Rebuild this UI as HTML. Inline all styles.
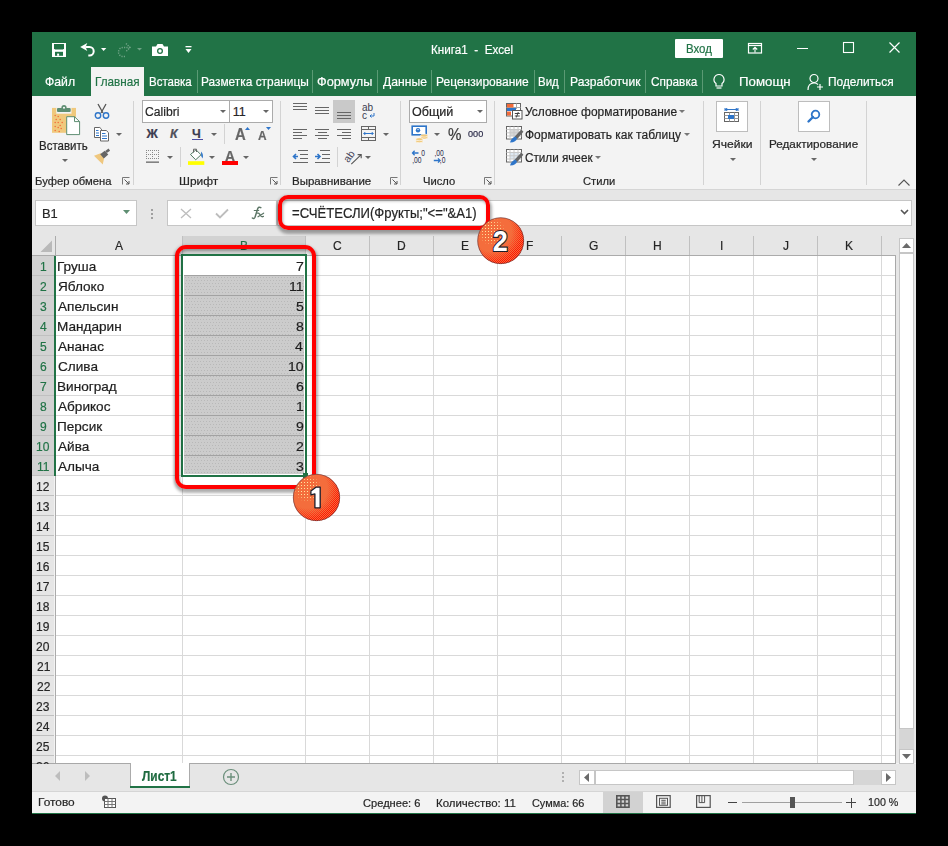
<!DOCTYPE html>
<html><head><meta charset="utf-8">
<style>
*{margin:0;padding:0;box-sizing:border-box}
html,body{width:948px;height:846px;background:#000;overflow:hidden;font-family:"Liberation Sans",sans-serif}
.a{position:absolute}
.t{position:absolute;white-space:nowrap;line-height:1;-webkit-text-stroke:0.2px currentColor}
svg{overflow:visible}
</style></head><body>
<div class="a" style="left:32px;top:32px;width:884px;height:782px;background:#F3F3F3;"></div>
<div class="a" style="left:32px;top:32px;width:884px;height:64px;background:#217346;"></div>
<svg class="a" style="left:52px;top:43px;" width="14" height="14" viewBox="0 0 14 14"><rect x="0" y="0" width="14" height="14" fill="#fff"/><path d="M2 1.1H12V5.6L11 6.5H3L2 5.6Z" fill="#217346"/><rect x="3" y="8.8" width="8" height="4" fill="#217346"/><rect x="5.1" y="10.6" width="2" height="2.2" fill="#fff"/></svg>
<svg class="a" style="left:76px;top:40px;" width="20" height="18" viewBox="0 0 20 18"><path d="M4.2 7L11.3 3L9.6 7L11.3 10.9Z" fill="#fff"/><path d="M9.5 7.1H13.5A4.2 4.2 0 0 1 13.5 15.5H12.3" fill="none" stroke="#fff" stroke-width="2"/></svg>
<svg class="a" style="left:100.9px;top:48px;" width="5.3" height="3" viewBox="0 0 5.3 3"><path d="M0 0H5.3L2.65 3Z" fill="#fff"/></svg>
<svg class="a" style="left:116px;top:42px;" width="17" height="16" viewBox="0 0 17 16"><path d="M14 5.5H7A4.5 4.5 0 0 0 7 14.5H9" fill="none" stroke="#6FA386" stroke-width="1.5" stroke-dasharray="1.2 1.2"/><path d="M10 1.5L14 5.5L10 9.5" fill="none" stroke="#6FA386" stroke-width="1.5" stroke-dasharray="1.2 1.2"/></svg>
<svg class="a" style="left:136.5px;top:48.25px;" width="5" height="2.5" viewBox="0 0 5 2.5"><path d="M0 0H5L2.5 2.5Z" fill="#6FA386"/></svg>
<svg class="a" style="left:151px;top:43px;" width="18" height="14" viewBox="0 0 18 14"><path d="M1 3.5H5L6.5 1H11.5L13 3.5H17V13H1Z" fill="#fff"/><circle cx="9" cy="8" r="3" fill="#217346"/><circle cx="9" cy="8" r="1.7" fill="#fff"/></svg>
<svg class="a" style="left:185px;top:46px;" width="7" height="8" viewBox="0 0 7 8"><rect x="0.5" y="0" width="6" height="1.3" fill="#fff"/><path d="M0.5 3H6.5L3.5 7Z" fill="#fff"/></svg>
<div class="t" style="left:430.84px;top:43.00px;font-size:13.23px;color:#fff;transform:scaleX(0.8835);transform-origin:0 0;">Книга1&nbsp; -&nbsp; Excel</div>
<div class="a" style="left:675px;top:39px;width:48px;height:19px;background:#fff;border-radius:1px"></div>
<div class="t" style="left:686.06px;top:43.00px;font-size:12.94px;color:#217346;transform:scaleX(0.8859);transform-origin:0 0;">Вход</div>
<svg class="a" style="left:748px;top:43px;" width="15" height="11" viewBox="0 0 15 11"><rect x="0.5" y="0.5" width="13" height="9.5" fill="none" stroke="#fff" stroke-width="1.2"/><path d="M0.5 2.5H13.5" stroke="#fff" stroke-width="1.2"/><path d="M7 9.5V4.5M4.8 6.5L7 4.3L9.2 6.5" fill="none" stroke="#fff" stroke-width="1.1"/></svg>
<div class="a" style="left:797px;top:48px;width:11px;height:1px;background:#fff;"></div>
<svg class="a" style="left:843px;top:42px;" width="11" height="11" viewBox="0 0 11 11"><rect x="0.5" y="0.5" width="10" height="10" fill="none" stroke="#fff" stroke-width="1.1"/></svg>
<svg class="a" style="left:889px;top:42px;" width="11" height="11" viewBox="0 0 11 11"><path d="M0.5 0.5L10.5 10.5M10.5 0.5L0.5 10.5" stroke="#fff" stroke-width="1.2"/></svg>
<div class="a" style="left:91px;top:67px;width:53px;height:29px;background:#F3F3F3;"></div>
<div class="t" style="left:44.59px;top:76.00px;font-size:12.94px;color:#fff;transform:scaleX(0.9452);transform-origin:0 0;">Файл</div>
<div class="t" style="left:94.74px;top:76.00px;font-size:12.94px;color:#217346;transform:scaleX(0.9031);transform-origin:0 0;">Главная</div>
<div class="t" style="left:149.06px;top:76.00px;font-size:12.94px;color:#fff;transform:scaleX(0.8889);transform-origin:0 0;">Вставка</div>
<div class="t" style="left:201.03px;top:76.00px;font-size:12.94px;color:#fff;transform:scaleX(0.9185);transform-origin:0 0;">Разметка страницы</div>
<div class="t" style="left:317.16px;top:76.00px;font-size:12.94px;color:#fff;transform:scaleX(0.9844);transform-origin:0 0;">Формулы</div>
<div class="t" style="left:382.71px;top:76.00px;font-size:12.94px;color:#fff;transform:scaleX(0.9397);transform-origin:0 0;">Данные</div>
<div class="t" style="left:436.22px;top:76.00px;font-size:12.94px;color:#fff;transform:scaleX(0.9281);transform-origin:0 0;">Рецензирование</div>
<div class="t" style="left:538.46px;top:76.00px;font-size:12.94px;color:#fff;transform:scaleX(0.8855);transform-origin:0 0;">Вид</div>
<div class="t" style="left:569.51px;top:76.00px;font-size:12.94px;color:#fff;transform:scaleX(0.9337);transform-origin:0 0;">Разработчик</div>
<div class="t" style="left:650.60px;top:76.00px;font-size:12.94px;color:#fff;transform:scaleX(0.9144);transform-origin:0 0;">Справка</div>
<div class="t" style="left:739.13px;top:76.00px;font-size:12.94px;color:#fff;transform:scaleX(1.0244);transform-origin:0 0;">Помощн</div>
<div class="t" style="left:827.54px;top:76.00px;font-size:12.94px;color:#fff;transform:scaleX(0.9181);transform-origin:0 0;">Поделиться</div>
<div class="a" style="left:197px;top:70px;width:1px;height:23px;background:#5A9A74;"></div>
<div class="a" style="left:312px;top:70px;width:1px;height:23px;background:#5A9A74;"></div>
<div class="a" style="left:377px;top:70px;width:1px;height:23px;background:#5A9A74;"></div>
<div class="a" style="left:431px;top:70px;width:1px;height:23px;background:#5A9A74;"></div>
<div class="a" style="left:534px;top:70px;width:1px;height:23px;background:#5A9A74;"></div>
<div class="a" style="left:564px;top:70px;width:1px;height:23px;background:#5A9A74;"></div>
<div class="a" style="left:645px;top:70px;width:1px;height:23px;background:#5A9A74;"></div>
<div class="a" style="left:702px;top:70px;width:1px;height:23px;background:#5A9A74;"></div>
<svg class="a" style="left:712px;top:73px;" width="14" height="18" viewBox="0 0 14 18"><path d="M7 1.5A5 5 0 0 0 4 10.5V13H10V10.5A5 5 0 0 0 7 1.5Z" fill="none" stroke="#fff" stroke-width="1.2"/><path d="M4.5 15H9.5" stroke="#fff" stroke-width="1.2"/></svg>
<svg class="a" style="left:807px;top:73px;" width="18" height="18" viewBox="0 0 18 18"><circle cx="7" cy="5.5" r="4" fill="none" stroke="#fff" stroke-width="1.2"/><path d="M1 17C1 12 4 10 7 10C9 10 10 10.5 11 11.5" fill="none" stroke="#fff" stroke-width="1.2"/><path d="M13 11V17M10 14H16" stroke="#fff" stroke-width="1.2"/></svg>
<div class="a" style="left:32px;top:189px;width:884px;height:1px;background:#D5D5D5;"></div>
<div class="a" style="left:32px;top:190px;width:884px;height:46px;background:#E6E6E6;"></div>
<div class="a" style="left:133px;top:101px;width:1px;height:84px;background:#D3D3D3;"></div>
<div class="a" style="left:280px;top:101px;width:1px;height:84px;background:#D3D3D3;"></div>
<div class="a" style="left:400px;top:101px;width:1px;height:84px;background:#D3D3D3;"></div>
<div class="a" style="left:494px;top:101px;width:1px;height:84px;background:#D3D3D3;"></div>
<div class="a" style="left:703px;top:101px;width:1px;height:84px;background:#D3D3D3;"></div>
<div class="a" style="left:760px;top:101px;width:1px;height:84px;background:#D3D3D3;"></div>
<div class="a" style="left:866px;top:101px;width:1px;height:84px;background:#D3D3D3;"></div>
<div class="t" style="left:34.78px;top:176.00px;font-size:11.05px;color:#262626;transform:scaleX(1.0181);transform-origin:0 0;">Буфер обмена</div>
<div class="t" style="left:178.92px;top:176.00px;font-size:11.05px;color:#262626;transform:scaleX(1.0780);transform-origin:0 0;">Шрифт</div>
<div class="t" style="left:292.46px;top:176.00px;font-size:11.05px;color:#262626;transform:scaleX(1.0423);transform-origin:0 0;">Выравнивание</div>
<div class="t" style="left:422.73px;top:176.00px;font-size:11.05px;color:#262626;transform:scaleX(1.0117);transform-origin:0 0;">Число</div>
<div class="t" style="left:583.43px;top:176.00px;font-size:11.05px;color:#262626;transform:scaleX(1.0102);transform-origin:0 0;">Стили</div>
<svg class="a" style="left:122px;top:177px;" width="8" height="8" viewBox="0 0 8 8"><path d="M0.5 7.5V0.5H7.5" fill="none" stroke="#777" stroke-width="1"/><path d="M2.5 2.5L7 7M7 4V7H4" fill="none" stroke="#555" stroke-width="1"/></svg>
<svg class="a" style="left:269.5px;top:177px;" width="8" height="8" viewBox="0 0 8 8"><path d="M0.5 7.5V0.5H7.5" fill="none" stroke="#777" stroke-width="1"/><path d="M2.5 2.5L7 7M7 4V7H4" fill="none" stroke="#555" stroke-width="1"/></svg>
<svg class="a" style="left:389.5px;top:177px;" width="8" height="8" viewBox="0 0 8 8"><path d="M0.5 7.5V0.5H7.5" fill="none" stroke="#777" stroke-width="1"/><path d="M2.5 2.5L7 7M7 4V7H4" fill="none" stroke="#555" stroke-width="1"/></svg>
<svg class="a" style="left:483.5px;top:177px;" width="8" height="8" viewBox="0 0 8 8"><path d="M0.5 7.5V0.5H7.5" fill="none" stroke="#777" stroke-width="1"/><path d="M2.5 2.5L7 7M7 4V7H4" fill="none" stroke="#555" stroke-width="1"/></svg>
<svg class="a" style="left:51px;top:104px;" width="30" height="32" viewBox="0 0 30 32"><rect x="1" y="3.9" width="24" height="24.9" fill="#F0C97D"/><rect x="5.3" y="3.5" width="15.2" height="6.2" fill="#F3F3F3"/><rect x="6" y="4" width="13.7" height="4" rx="1" fill="#5E8E72"/><circle cx="13" cy="3.6" r="2.6" fill="#5E8E72"/><circle cx="13" cy="3.8" r="1" fill="#fff"/><g fill="#F26B3A"><circle cx="4.2" cy="11.5" r="0.75"/><circle cx="7.2" cy="12.5" r="0.75"/><circle cx="5.2" cy="15.5" r="0.75"/><circle cx="9.2" cy="15.5" r="0.75"/><circle cx="4.2" cy="18.5" r="0.75"/><circle cx="7.2" cy="18.5" r="0.75"/><circle cx="11.2" cy="18.5" r="0.75"/><circle cx="9.2" cy="21.5" r="0.75"/><circle cx="4.2" cy="22.5" r="0.75"/><circle cx="7.2" cy="23.5" r="0.75"/><circle cx="10.2" cy="24.5" r="0.75"/><circle cx="4.2" cy="26.5" r="0.75"/><circle cx="8.2" cy="27.5" r="0.75"/></g><path d="M15.7 12.7H23.5L28.6 17.6V30.6H15.7Z" fill="#fff" stroke="#5E8E72" stroke-width="1"/><path d="M23.5 12.7V17.6H28.6" fill="none" stroke="#5E8E72" stroke-width="1"/></svg>
<div class="t" style="left:39.36px;top:141.00px;font-size:11.92px;color:#262626;transform:scaleX(0.9642);transform-origin:0 0;">Вставить</div>
<svg class="a" style="left:61.5px;top:158.5px;" width="6" height="3.0" viewBox="0 0 6 3.0"><path d="M0 0H6L3.0 3.0Z" fill="#666"/></svg>
<svg class="a" style="left:94px;top:103px;" width="16" height="16" viewBox="0 0 16 16"><path d="M4 1L9 10M12 1L7 10" stroke="#555" stroke-width="1.3"/><circle cx="4" cy="12.5" r="2.7" fill="none" stroke="#2E75C9" stroke-width="1.4"/><circle cx="12" cy="12.5" r="2.7" fill="none" stroke="#2E75C9" stroke-width="1.4"/></svg>
<svg class="a" style="left:93px;top:126px;" width="18" height="16" viewBox="0 0 18 16"><path d="M1.5 1.5H6.8L8.5 3.2V11.5H1.5Z" fill="#fff" stroke="#666" stroke-width="1"/><path d="M3 4.5H5.5M3 7H6M3 9.5H6" stroke="#2E75C9" stroke-width="1"/><path d="M7.5 4.5H13.3L15.5 6.7V15H7.5Z" fill="#fff" stroke="#666" stroke-width="1"/><path d="M9 7.5H12.5M9 10H14M9 12.5H14" stroke="#2E75C9" stroke-width="1"/></svg>
<svg class="a" style="left:116.0px;top:132.5px;" width="6" height="3.0" viewBox="0 0 6 3.0"><path d="M0 0H6L3.0 3.0Z" fill="#666"/></svg>
<svg class="a" style="left:93px;top:149px;" width="18" height="17" viewBox="0 0 18 17"><path d="M1 6.8L7.6 4.2L11.2 8.3L9.8 15.5Z" fill="#EFC77E"/><path d="M7.2 5.2L11.8 1.8L15.3 5.6L10.8 9.6Z" fill="#666"/><path d="M13 3L16.3 0.6" stroke="#666" stroke-width="2.6"/></svg>
<div class="a" style="left:142px;top:100px;width:131px;height:23px;background:#fff;border:1px solid #ABABAB"></div>
<div class="a" style="left:229px;top:101px;width:1px;height:21px;background:#ABABAB;"></div>
<div class="t" style="left:144.98px;top:106.00px;font-size:12.50px;color:#262626;transform:scaleX(0.9720);transform-origin:0 0;">Calibri</div>
<svg class="a" style="left:219.5px;top:110.0px;" width="6" height="3.0" viewBox="0 0 6 3.0"><path d="M0 0H6L3.0 3.0Z" fill="#666"/></svg>
<div class="t" style="left:232.75px;top:106.00px;font-size:12.50px;color:#262626;">11</div>
<svg class="a" style="left:262.5px;top:110.0px;" width="6" height="3.0" viewBox="0 0 6 3.0"><path d="M0 0H6L3.0 3.0Z" fill="#666"/></svg>
<div class="t" style="left:146.5px;top:128px;font-size:12.5px;color:#3C3C50;font-weight:bold">Ж</div>
<div class="t" style="left:170px;top:128px;font-size:12.5px;color:#50505A;font-style:italic;font-weight:bold">К</div>
<div class="t" style="left:192px;top:128px;font-size:12.5px;color:#3C3C50;font-weight:bold">Ч</div>
<div class="a" style="left:192px;top:139px;width:11px;height:1px;background:#4B4BA0;"></div>
<svg class="a" style="left:210.5px;top:132.5px;" width="6" height="3.0" viewBox="0 0 6 3.0"><path d="M0 0H6L3.0 3.0Z" fill="#666"/></svg>
<div class="a" style="left:224px;top:124px;width:1px;height:20px;background:#D3D3D3;"></div>
<div class="t" style="left:235.13px;top:126.00px;font-size:16.28px;color:#666;font-weight:bold;transform:scaleX(0.9155);transform-origin:0 0;">A</div>
<svg class="a" style="left:244.5px;top:127px;" width="5" height="3" viewBox="0 0 5 3"><path d="M0 3L2.5 0L5 3Z" fill="#2E75C9"/></svg>
<div class="t" style="left:258.00px;top:129.00px;font-size:13.08px;color:#666;font-weight:bold;transform:scaleX(0.9114);transform-origin:0 0;">A</div>
<svg class="a" style="left:265.5px;top:127px;" width="5" height="3" viewBox="0 0 5 3"><path d="M0 0H5L2.5 3Z" fill="#2E75C9"/></svg>
<svg class="a" style="left:145px;top:149px;" width="16" height="15" viewBox="0 0 16 15"><g fill="#888"><rect x="1" y="1" width="1" height="1"/><rect x="3" y="1" width="1" height="1"/><rect x="5" y="1" width="1" height="1"/><rect x="7" y="1" width="1" height="1"/><rect x="9" y="1" width="1" height="1"/><rect x="11" y="1" width="1" height="1"/><rect x="13" y="1" width="1" height="1"/><rect x="1" y="5" width="1" height="1"/><rect x="3" y="5" width="1" height="1"/><rect x="5" y="5" width="1" height="1"/><rect x="7" y="5" width="1" height="1"/><rect x="9" y="5" width="1" height="1"/><rect x="11" y="5" width="1" height="1"/><rect x="13" y="5" width="1" height="1"/><rect x="1" y="9" width="1" height="1"/><rect x="3" y="9" width="1" height="1"/><rect x="5" y="9" width="1" height="1"/><rect x="7" y="9" width="1" height="1"/><rect x="9" y="9" width="1" height="1"/><rect x="11" y="9" width="1" height="1"/><rect x="13" y="9" width="1" height="1"/><rect x="1" y="3" width="1" height="1"/><rect x="1" y="7" width="1" height="1"/><rect x="7" y="3" width="1" height="1"/><rect x="7" y="7" width="1" height="1"/><rect x="13" y="3" width="1" height="1"/><rect x="13" y="7" width="1" height="1"/></g><rect x="1" y="12.5" width="13" height="1.3" fill="#666"/></svg>
<svg class="a" style="left:166.5px;top:155.5px;" width="6" height="3.0" viewBox="0 0 6 3.0"><path d="M0 0H6L3.0 3.0Z" fill="#666"/></svg>
<div class="a" style="left:180px;top:147px;width:1px;height:20px;background:#D3D3D3;"></div>
<svg class="a" style="left:187px;top:148px;" width="18" height="18" viewBox="0 0 18 18"><path d="M3.5 6.5L9 1.8L14 6.8L8.7 11.8Z" fill="#fff" stroke="#4F7A62" stroke-width="1"/><path d="M6.5 4.5V1.2H9.5V4" fill="none" stroke="#666" stroke-width="1"/><path d="M14 3.5Q17 6.5 15.5 10.5Q13.5 8 14 3.5Z" fill="#2E75C9"/><rect x="1" y="13.2" width="16.3" height="3.7" fill="#FFFF00"/></svg>
<svg class="a" style="left:209.0px;top:155.5px;" width="6" height="3.0" viewBox="0 0 6 3.0"><path d="M0 0H6L3.0 3.0Z" fill="#666"/></svg>
<div class="t" style="left:225.15px;top:149.00px;font-size:14.24px;color:#666;font-weight:bold;transform:scaleX(0.9730);transform-origin:0 0;">A</div>
<div class="a" style="left:222px;top:161px;width:16px;height:4px;background:#FF0000;"></div>
<svg class="a" style="left:243.0px;top:155.5px;" width="6" height="3.0" viewBox="0 0 6 3.0"><path d="M0 0H6L3.0 3.0Z" fill="#666"/></svg>
<div class="a" style="left:293px;top:103px;width:14px;height:1px;background:#666;"></div>
<div class="a" style="left:293px;top:106px;width:14px;height:1px;background:#666;"></div>
<div class="a" style="left:293px;top:109px;width:14px;height:1px;background:#666;"></div>
<div class="a" style="left:315px;top:107px;width:14px;height:1px;background:#666;"></div>
<div class="a" style="left:315px;top:110px;width:14px;height:1px;background:#666;"></div>
<div class="a" style="left:315px;top:113px;width:14px;height:1px;background:#666;"></div>
<div class="a" style="left:333px;top:100px;width:22px;height:23px;background:#C9C9C9;"></div>
<div class="a" style="left:337px;top:112px;width:14px;height:1px;background:#666;"></div>
<div class="a" style="left:337px;top:115px;width:14px;height:1px;background:#666;"></div>
<div class="a" style="left:337px;top:118px;width:14px;height:1px;background:#666;"></div>
<svg class="a" style="left:361px;top:103px;" width="16" height="17" viewBox="0 0 16 17"><text x="1" y="8" font-family="Liberation Sans" font-size="10" fill="#3C3C50">ab</text><text x="1" y="16" font-family="Liberation Sans" font-size="10" fill="#3C3C50">c</text><path d="M13 10V13H9M10.5 11.5L9 13L10.5 14.5" fill="none" stroke="#2E75C9" stroke-width="1"/></svg>
<div class="a" style="left:293px;top:129px;width:14px;height:1px;background:#666;"></div>
<div class="a" style="left:293px;top:132px;width:9px;height:1px;background:#666;"></div>
<div class="a" style="left:293px;top:135px;width:14px;height:1px;background:#666;"></div>
<div class="a" style="left:293px;top:138px;width:9px;height:1px;background:#666;"></div>
<div class="a" style="left:315px;top:129px;width:14px;height:1px;background:#666;"></div>
<div class="a" style="left:317.5px;top:132px;width:9.0px;height:1px;background:#666;"></div>
<div class="a" style="left:315px;top:135px;width:14px;height:1px;background:#666;"></div>
<div class="a" style="left:317.5px;top:138px;width:9.0px;height:1px;background:#666;"></div>
<div class="a" style="left:337px;top:129px;width:14px;height:1px;background:#666;"></div>
<div class="a" style="left:342px;top:132px;width:9px;height:1px;background:#666;"></div>
<div class="a" style="left:337px;top:135px;width:14px;height:1px;background:#666;"></div>
<div class="a" style="left:342px;top:138px;width:9px;height:1px;background:#666;"></div>
<svg class="a" style="left:360px;top:125px;" width="17" height="17" viewBox="0 0 17 17"><rect x="1.5" y="1.5" width="14" height="14" fill="none" stroke="#666" stroke-width="1"/><path d="M1.5 4.5H15.5M1.5 12.5H15.5M8.5 1.5V4.5M8.5 12.5V15.5" stroke="#666" stroke-width="1"/><path d="M3.8 8.5H13.2M5.3 7L3.8 8.5L5.3 10M11.7 7L13.2 8.5L11.7 10" fill="none" stroke="#2E75C9" stroke-width="1"/></svg>
<svg class="a" style="left:382.5px;top:132.5px;" width="6" height="3.0" viewBox="0 0 6 3.0"><path d="M0 0H6L3.0 3.0Z" fill="#666"/></svg>
<svg class="a" style="left:292px;top:149px;" width="17" height="15" viewBox="0 0 17 15"><path d="M6 1.5H16M8 5.5H16M8 9.5H16M1 13.5H16" stroke="#666" stroke-width="1"/><path d="M6 7.5H1.5M4 5L1.5 7.5L4 10" fill="none" stroke="#2E75C9" stroke-width="1.6"/></svg>
<svg class="a" style="left:314px;top:149px;" width="17" height="15" viewBox="0 0 17 15"><path d="M6 1.5H16M8 5.5H16M8 9.5H16M1 13.5H16" stroke="#666" stroke-width="1"/><path d="M1 7.5H6M3.5 5L6 7.5L3.5 10" fill="none" stroke="#2E75C9" stroke-width="1.6"/></svg>
<div class="a" style="left:337px;top:147px;width:1px;height:20px;background:#D3D3D3;"></div>
<svg class="a" style="left:344px;top:148px;" width="19" height="17" viewBox="0 0 19 17"><text transform="translate(4.6 15.2) rotate(-55)" x="0" y="0" style="font-family:'Liberation Sans';font-size:10.5px" fill="#45455A">ab</text><path d="M7.3 16.2L17.2 6.6M13.6 6.6H17.2V10.2" fill="none" stroke="#555" stroke-width="1.1"/></svg>
<svg class="a" style="left:365.0px;top:155.5px;" width="6" height="3.0" viewBox="0 0 6 3.0"><path d="M0 0H6L3.0 3.0Z" fill="#666"/></svg>
<div class="a" style="left:409px;top:100px;width:78px;height:23px;background:#fff;border:1px solid #ABABAB"></div>
<div class="t" style="left:412.01px;top:106.00px;font-size:12.35px;color:#262626;transform:scaleX(1.0175);transform-origin:0 0;">Общий</div>
<svg class="a" style="left:476.5px;top:110.0px;" width="6" height="3.0" viewBox="0 0 6 3.0"><path d="M0 0H6L3.0 3.0Z" fill="#666"/></svg>
<svg class="a" style="left:411px;top:125px;" width="19" height="19" viewBox="0 0 19 19"><rect x="1.2" y="1.2" width="14" height="8.6" fill="#fff" stroke="#2E75C9" stroke-width="1.6"/><circle cx="7" cy="5.2" r="2.2" fill="#2E75C9"/><path d="M6.3 4.6H7.8" stroke="#fff" stroke-width="0.8"/><g fill="#F0C97D" stroke="#fff" stroke-width="0.6"><ellipse cx="13.2" cy="12.6" rx="3.6" ry="1.5"/><ellipse cx="13.2" cy="10.6" rx="3.6" ry="1.5"/><ellipse cx="8.3" cy="16.2" rx="3.6" ry="1.5"/><ellipse cx="8.3" cy="14.2" rx="3.6" ry="1.5"/></g></svg>
<svg class="a" style="left:433.5px;top:132.5px;" width="6" height="3.0" viewBox="0 0 6 3.0"><path d="M0 0H6L3.0 3.0Z" fill="#666"/></svg>
<div class="t" style="left:447.95px;top:127.00px;font-size:15.99px;color:#3A3A3A;transform:scaleX(0.9481);transform-origin:0 0;">%</div>
<div class="t" style="left:468.44px;top:129.00px;font-size:9.45px;color:#2A2A48;transform:scaleX(0.9653);transform-origin:0 0;">000</div>
<svg class="a" style="left:411px;top:149px;" width="17" height="16" viewBox="0 0 17 16"><path d="M7.5 4H1.5M3.6 1.8L1.5 4L3.6 6.2" fill="none" stroke="#2E75C9" stroke-width="1.3"/><text transform="translate(10.3 6.8) scale(0.78 1)" style="font-family:'Liberation Sans';font-size:8.6px" fill="#2A2A48">0</text><text transform="translate(1.2 14.2) scale(0.78 1)" style="font-family:'Liberation Sans';font-size:8.6px" fill="#2A2A48">,00</text></svg>
<svg class="a" style="left:433px;top:149px;" width="17" height="16" viewBox="0 0 17 16"><text transform="translate(1.5 6.8) scale(0.78 1)" style="font-family:'Liberation Sans';font-size:8.6px" fill="#2A2A48">,00</text><path d="M0.8 11.5H7M5 9.4L7.1 11.5L5 13.6" fill="none" stroke="#2E75C9" stroke-width="1.3"/><text transform="translate(6.8 14.2) scale(0.78 1)" style="font-family:'Liberation Sans';font-size:8.6px" fill="#2A2A48">,0</text></svg>
<svg class="a" style="left:505.5px;top:102.5px;" width="17" height="17" viewBox="0 0 17 17"><rect x="0.5" y="0.5" width="14" height="12.5" fill="#fff" stroke="#666" stroke-width="1"/><path d="M10.5 0.5V6M0.5 4.5H14.5" stroke="#AAA" stroke-width="1"/><rect x="1" y="1" width="6.5" height="3.5" fill="#F26B3A"/><rect x="1" y="5" width="9" height="3" fill="#2E75C9"/><rect x="1" y="8.5" width="4" height="4" fill="#F26B3A"/><rect x="6.5" y="7.5" width="9.5" height="8.5" fill="#fff" stroke="#555" stroke-width="1"/><path d="M8.8 10.5H13.8M8.8 13H13.8M12.3 9L10.3 14.5" stroke="#333" stroke-width="0.9"/></svg>
<div class="t" style="left:524.98px;top:106.00px;font-size:12.21px;color:#262626;transform:scaleX(0.9795);transform-origin:0 0;">Условное форматирование</div>
<svg class="a" style="left:679.0px;top:110.0px;" width="6" height="3.0" viewBox="0 0 6 3.0"><path d="M0 0H6L3.0 3.0Z" fill="#777"/></svg>
<svg class="a" style="left:505.5px;top:125.5px;" width="17" height="17" viewBox="0 0 17 17"><rect x="0.5" y="0.5" width="15" height="12.5" fill="#fff" stroke="#666" stroke-width="1"/><rect x="4" y="4" width="9" height="6" fill="#D8D8D8"/><path d="M0.5 3.5H15.5M0.5 6.8H15.5M0.5 10H15.5M4 0.5V13M8 0.5V13M12 0.5V13" stroke="#C8C8C8" stroke-width="1"/><path d="M8.6 10.8L15.2 3.6L17.4 5.8L11 13.2Z" fill="#666"/><path d="M4 16.5Q5.5 12 9.2 10.6L11 12.4Q10.5 16 4 16.5Z" fill="#2E75C9"/></svg>
<div class="t" style="left:524.60px;top:129.00px;font-size:12.21px;color:#262626;transform:scaleX(0.9828);transform-origin:0 0;">Форматировать как таблицу</div>
<svg class="a" style="left:684.0px;top:133.0px;" width="6" height="3.0" viewBox="0 0 6 3.0"><path d="M0 0H6L3.0 3.0Z" fill="#777"/></svg>
<svg class="a" style="left:505.5px;top:148.5px;" width="17" height="17" viewBox="0 0 17 17"><rect x="0.5" y="0.5" width="15" height="12.5" fill="#fff" stroke="#666" stroke-width="1"/><rect x="4" y="3" width="9" height="7" fill="#DDE8F2"/><path d="M0.5 3.5H15.5M0.5 6.8H15.5M0.5 10H15.5M4 0.5V13M8 0.5V13M12 0.5V13" stroke="#C8C8C8" stroke-width="1"/><path d="M8.6 10.8L15.2 3.6L17.4 5.8L11 13.2Z" fill="#666"/><path d="M4 16.5Q5.5 12 9.2 10.6L11 12.4Q10.5 16 4 16.5Z" fill="#2E75C9"/></svg>
<div class="t" style="left:524.70px;top:152.00px;font-size:12.21px;color:#262626;transform:scaleX(0.9585);transform-origin:0 0;">Стили ячеек</div>
<svg class="a" style="left:595.0px;top:156.0px;" width="6" height="3.0" viewBox="0 0 6 3.0"><path d="M0 0H6L3.0 3.0Z" fill="#777"/></svg>
<div class="a" style="left:716px;top:101px;width:32px;height:31px;background:#fff;border:1px solid #BDBDBD"></div>
<svg class="a" style="left:723px;top:108px;" width="17" height="16" viewBox="0 0 17 16"><path d="M2 1.5H15M2 0V3M15 0V3M5 1.5L3 0.5V2.5ZM12 1.5L14 0.5V2.5Z" stroke="#2E75C9" stroke-width="1" fill="#2E75C9"/><rect x="1.5" y="4.5" width="14" height="9" fill="#fff" stroke="#666" stroke-width="1"/><path d="M1.5 7.5H15.5M1.5 10.5H15.5M6.5 4.5V13.5M11.5 4.5V13.5" stroke="#999" stroke-width="1"/><rect x="5" y="7" width="6" height="4" fill="#2E75C9"/></svg>
<div class="t" style="left:711.83px;top:139.00px;font-size:11.48px;color:#262626;transform:scaleX(1.0546);transform-origin:0 0;">Ячейки</div>
<svg class="a" style="left:729.5px;top:157.5px;" width="6" height="3.0" viewBox="0 0 6 3.0"><path d="M0 0H6L3.0 3.0Z" fill="#666"/></svg>
<div class="a" style="left:798px;top:101px;width:32px;height:31px;background:#fff;border:1px solid #BDBDBD"></div>
<svg class="a" style="left:806px;top:108px;" width="16" height="16" viewBox="0 0 16 16"><circle cx="9.5" cy="6.5" r="3.8" fill="none" stroke="#2E75C9" stroke-width="1.8"/><path d="M7 9L2.5 13.5" stroke="#2E75C9" stroke-width="2.4" stroke-linecap="round"/></svg>
<div class="t" style="left:768.84px;top:139.00px;font-size:11.48px;color:#262626;transform:scaleX(1.0206);transform-origin:0 0;">Редактирование</div>
<svg class="a" style="left:810.5px;top:157.5px;" width="6" height="3.0" viewBox="0 0 6 3.0"><path d="M0 0H6L3.0 3.0Z" fill="#666"/></svg>
<svg class="a" style="left:898px;top:179px;" width="12" height="7" viewBox="0 0 12 7"><path d="M0.5 6.5L6 1L11.5 6.5" fill="none" stroke="#555" stroke-width="1.1"/></svg>
<div class="a" style="left:35px;top:200px;width:102px;height:26px;background:#fff;border:1px solid #C6C6C6"></div>
<div class="t" style="left:41.74px;top:207.00px;font-size:13.08px;color:#262626;transform:scaleX(0.9871);transform-origin:0 0;">B1</div>
<svg class="a" style="left:123px;top:210px;" width="8" height="5" viewBox="0 0 8 5"><path d="M0 0H7L3.5 4Z" fill="#5E8E72"/></svg>
<div class="a" style="left:151px;top:208.5px;width:2px;height:2.0px;background:#A0A0A0;"></div>
<div class="a" style="left:151px;top:212.5px;width:2px;height:2.0px;background:#A0A0A0;"></div>
<div class="a" style="left:151px;top:216.5px;width:2px;height:2.0px;background:#A0A0A0;"></div>
<div class="a" style="left:167px;top:200px;width:110px;height:26px;background:#fff;border:1px solid #C6C6C6"></div>
<svg class="a" style="left:180px;top:208px;" width="12" height="11" viewBox="0 0 12 11"><path d="M1 1L11 10M11 1L1 10" stroke="#BDBDBD" stroke-width="1.3"/></svg>
<svg class="a" style="left:215px;top:208px;" width="14" height="11" viewBox="0 0 14 11"><path d="M1 5.5L5 9.5L13 1.5" fill="none" stroke="#BDBDBD" stroke-width="1.8"/></svg>
<svg class="a" style="left:246px;top:202px;" width="22" height="20" viewBox="0 0 22 20"><g fill="none" stroke="#5B7565" stroke-linecap="round"><path d="M14.8 5.6Q12.6 4.4 11.7 6.8L9 15.2Q8 17.3 6.4 16" stroke-width="1.5"/><path d="M8.3 8.5H12.7" stroke-width="1.2"/><path d="M11.6 11.2Q12.8 10.7 13.6 12.2L15.1 14.2Q15.9 15.2 17.4 14.4M17.6 11.2L12 14.7" stroke-width="1.3"/></g></svg>
<div class="a" style="left:277px;top:200px;width:635px;height:26px;background:#fff;border:1px solid #C6C6C6"></div>
<div class="t" style="left:291.66px;top:207.00px;font-size:13.81px;color:#262626;transform:scaleX(0.9501);transform-origin:0 0;">=СЧЁТЕСЛИ(Фрукты;"&lt;="&amp;A1)</div>
<svg class="a" style="left:900px;top:209px;" width="9" height="6" viewBox="0 0 9 6"><path d="M1 1L4.5 4.5L8 1" fill="none" stroke="#555" stroke-width="1.6"/></svg>
<div class="a" style="left:32px;top:236px;width:864px;height:20px;background:#E6E6E6;"></div>
<svg class="a" style="left:39px;top:239px;" width="14" height="14" viewBox="0 0 14 14"><path d="M13 1.5V13H1.5Z" fill="#B9B9B9"/></svg>
<div class="a" style="left:182px;top:236px;width:123px;height:20px;background:#D2D2D2;"></div>
<div class="a" style="left:55px;top:236px;width:1px;height:20px;background:#ABABAB;"></div>
<div class="a" style="left:182px;top:236px;width:1px;height:20px;background:#C0C0C0;"></div>
<div class="a" style="left:305px;top:236px;width:1px;height:20px;background:#C0C0C0;"></div>
<div class="a" style="left:369px;top:236px;width:1px;height:20px;background:#C0C0C0;"></div>
<div class="a" style="left:433px;top:236px;width:1px;height:20px;background:#C0C0C0;"></div>
<div class="a" style="left:497px;top:236px;width:1px;height:20px;background:#C0C0C0;"></div>
<div class="a" style="left:561px;top:236px;width:1px;height:20px;background:#C0C0C0;"></div>
<div class="a" style="left:625px;top:236px;width:1px;height:20px;background:#C0C0C0;"></div>
<div class="a" style="left:689px;top:236px;width:1px;height:20px;background:#C0C0C0;"></div>
<div class="a" style="left:753px;top:236px;width:1px;height:20px;background:#C0C0C0;"></div>
<div class="a" style="left:817px;top:236px;width:1px;height:20px;background:#C0C0C0;"></div>
<div class="a" style="left:881px;top:236px;width:1px;height:20px;background:#C0C0C0;"></div>
<div class="a" style="left:32px;top:255px;width:864px;height:1px;background:#ABABAB;"></div>
<div class="a" style="left:182px;top:254px;width:124px;height:2px;background:#217346;"></div>
<div class="t" style="left:114.99px;top:239.00px;font-size:13.37px;color:#262626;transform:scaleX(0.9000);transform-origin:0 0;">A</div>
<div class="t" style="left:239.81px;top:239.00px;font-size:13.37px;color:#217346;transform:scaleX(0.9000);transform-origin:0 0;">B</div>
<div class="t" style="left:333.08px;top:239.00px;font-size:13.37px;color:#262626;transform:scaleX(0.9000);transform-origin:0 0;">C</div>
<div class="t" style="left:396.95px;top:239.00px;font-size:13.37px;color:#262626;transform:scaleX(0.9000);transform-origin:0 0;">D</div>
<div class="t" style="left:461.25px;top:239.00px;font-size:13.37px;color:#262626;transform:scaleX(0.9000);transform-origin:0 0;">E</div>
<div class="t" style="left:525.57px;top:239.00px;font-size:13.37px;color:#262626;transform:scaleX(0.9000);transform-origin:0 0;">F</div>
<div class="t" style="left:588.97px;top:239.00px;font-size:13.37px;color:#262626;transform:scaleX(0.9000);transform-origin:0 0;">G</div>
<div class="t" style="left:653.15px;top:239.00px;font-size:13.37px;color:#262626;transform:scaleX(0.9000);transform-origin:0 0;">H</div>
<div class="t" style="left:719.83px;top:239.00px;font-size:13.37px;color:#262626;transform:scaleX(0.9000);transform-origin:0 0;">I</div>
<div class="t" style="left:782.84px;top:239.00px;font-size:13.37px;color:#262626;transform:scaleX(0.9000);transform-origin:0 0;">J</div>
<div class="t" style="left:845.07px;top:239.00px;font-size:13.37px;color:#262626;transform:scaleX(0.9000);transform-origin:0 0;">K</div>
<div class="a" style="left:55px;top:256px;width:840px;height:507px;background:#fff;"></div>
<div class="a" style="left:32px;top:256px;width:22px;height:507px;background:#E6E6E6;"></div>
<div class="a" style="left:32px;top:256px;width:22px;height:220px;background:#D2D2D2;"></div>
<div class="a" style="left:55px;top:275px;width:840px;height:1px;background:#D9D9D9;"></div>
<div class="a" style="left:32px;top:275px;width:22px;height:1px;background:#C0C0C0;"></div>
<div class="a" style="left:55px;top:295px;width:840px;height:1px;background:#D9D9D9;"></div>
<div class="a" style="left:32px;top:295px;width:22px;height:1px;background:#C0C0C0;"></div>
<div class="a" style="left:55px;top:315px;width:840px;height:1px;background:#D9D9D9;"></div>
<div class="a" style="left:32px;top:315px;width:22px;height:1px;background:#C0C0C0;"></div>
<div class="a" style="left:55px;top:335px;width:840px;height:1px;background:#D9D9D9;"></div>
<div class="a" style="left:32px;top:335px;width:22px;height:1px;background:#C0C0C0;"></div>
<div class="a" style="left:55px;top:355px;width:840px;height:1px;background:#D9D9D9;"></div>
<div class="a" style="left:32px;top:355px;width:22px;height:1px;background:#C0C0C0;"></div>
<div class="a" style="left:55px;top:375px;width:840px;height:1px;background:#D9D9D9;"></div>
<div class="a" style="left:32px;top:375px;width:22px;height:1px;background:#C0C0C0;"></div>
<div class="a" style="left:55px;top:395px;width:840px;height:1px;background:#D9D9D9;"></div>
<div class="a" style="left:32px;top:395px;width:22px;height:1px;background:#C0C0C0;"></div>
<div class="a" style="left:55px;top:415px;width:840px;height:1px;background:#D9D9D9;"></div>
<div class="a" style="left:32px;top:415px;width:22px;height:1px;background:#C0C0C0;"></div>
<div class="a" style="left:55px;top:435px;width:840px;height:1px;background:#D9D9D9;"></div>
<div class="a" style="left:32px;top:435px;width:22px;height:1px;background:#C0C0C0;"></div>
<div class="a" style="left:55px;top:455px;width:840px;height:1px;background:#D9D9D9;"></div>
<div class="a" style="left:32px;top:455px;width:22px;height:1px;background:#C0C0C0;"></div>
<div class="a" style="left:55px;top:475px;width:840px;height:1px;background:#D9D9D9;"></div>
<div class="a" style="left:32px;top:475px;width:22px;height:1px;background:#C0C0C0;"></div>
<div class="a" style="left:55px;top:495px;width:840px;height:1px;background:#D9D9D9;"></div>
<div class="a" style="left:32px;top:495px;width:22px;height:1px;background:#C0C0C0;"></div>
<div class="a" style="left:55px;top:515px;width:840px;height:1px;background:#D9D9D9;"></div>
<div class="a" style="left:32px;top:515px;width:22px;height:1px;background:#C0C0C0;"></div>
<div class="a" style="left:55px;top:535px;width:840px;height:1px;background:#D9D9D9;"></div>
<div class="a" style="left:32px;top:535px;width:22px;height:1px;background:#C0C0C0;"></div>
<div class="a" style="left:55px;top:555px;width:840px;height:1px;background:#D9D9D9;"></div>
<div class="a" style="left:32px;top:555px;width:22px;height:1px;background:#C0C0C0;"></div>
<div class="a" style="left:55px;top:575px;width:840px;height:1px;background:#D9D9D9;"></div>
<div class="a" style="left:32px;top:575px;width:22px;height:1px;background:#C0C0C0;"></div>
<div class="a" style="left:55px;top:595px;width:840px;height:1px;background:#D9D9D9;"></div>
<div class="a" style="left:32px;top:595px;width:22px;height:1px;background:#C0C0C0;"></div>
<div class="a" style="left:55px;top:615px;width:840px;height:1px;background:#D9D9D9;"></div>
<div class="a" style="left:32px;top:615px;width:22px;height:1px;background:#C0C0C0;"></div>
<div class="a" style="left:55px;top:635px;width:840px;height:1px;background:#D9D9D9;"></div>
<div class="a" style="left:32px;top:635px;width:22px;height:1px;background:#C0C0C0;"></div>
<div class="a" style="left:55px;top:655px;width:840px;height:1px;background:#D9D9D9;"></div>
<div class="a" style="left:32px;top:655px;width:22px;height:1px;background:#C0C0C0;"></div>
<div class="a" style="left:55px;top:675px;width:840px;height:1px;background:#D9D9D9;"></div>
<div class="a" style="left:32px;top:675px;width:22px;height:1px;background:#C0C0C0;"></div>
<div class="a" style="left:55px;top:695px;width:840px;height:1px;background:#D9D9D9;"></div>
<div class="a" style="left:32px;top:695px;width:22px;height:1px;background:#C0C0C0;"></div>
<div class="a" style="left:55px;top:715px;width:840px;height:1px;background:#D9D9D9;"></div>
<div class="a" style="left:32px;top:715px;width:22px;height:1px;background:#C0C0C0;"></div>
<div class="a" style="left:55px;top:735px;width:840px;height:1px;background:#D9D9D9;"></div>
<div class="a" style="left:32px;top:735px;width:22px;height:1px;background:#C0C0C0;"></div>
<div class="a" style="left:55px;top:755px;width:840px;height:1px;background:#D9D9D9;"></div>
<div class="a" style="left:32px;top:755px;width:22px;height:1px;background:#C0C0C0;"></div>
<div class="a" style="left:182px;top:256px;width:1px;height:507px;background:#D9D9D9;"></div>
<div class="a" style="left:305px;top:256px;width:1px;height:507px;background:#D9D9D9;"></div>
<div class="a" style="left:369px;top:256px;width:1px;height:507px;background:#D9D9D9;"></div>
<div class="a" style="left:433px;top:256px;width:1px;height:507px;background:#D9D9D9;"></div>
<div class="a" style="left:497px;top:256px;width:1px;height:507px;background:#D9D9D9;"></div>
<div class="a" style="left:561px;top:256px;width:1px;height:507px;background:#D9D9D9;"></div>
<div class="a" style="left:625px;top:256px;width:1px;height:507px;background:#D9D9D9;"></div>
<div class="a" style="left:689px;top:256px;width:1px;height:507px;background:#D9D9D9;"></div>
<div class="a" style="left:753px;top:256px;width:1px;height:507px;background:#D9D9D9;"></div>
<div class="a" style="left:817px;top:256px;width:1px;height:507px;background:#D9D9D9;"></div>
<div class="a" style="left:881px;top:256px;width:1px;height:507px;background:#D9D9D9;"></div>
<div class="a" style="left:895px;top:256px;width:1px;height:507px;background:#A8A8A8;"></div>
<div class="a" style="left:32px;top:763px;width:864px;height:1px;background:#A8A8A8;"></div>
<div class="a" style="left:55px;top:256px;width:1px;height:507px;background:#ABABAB;"></div>
<div class="a" style="left:54px;top:256px;width:2px;height:220px;background:#217346;"></div>
<div class="t" style="left:39.69px;top:260.00px;font-size:13.08px;color:#217346;transform:scaleX(0.9200);transform-origin:0 0;">1</div>
<div class="t" style="left:39.85px;top:280.00px;font-size:13.08px;color:#217346;transform:scaleX(0.9200);transform-origin:0 0;">2</div>
<div class="t" style="left:39.89px;top:300.00px;font-size:13.08px;color:#217346;transform:scaleX(0.9200);transform-origin:0 0;">3</div>
<div class="t" style="left:39.89px;top:320.00px;font-size:13.08px;color:#217346;transform:scaleX(0.9200);transform-origin:0 0;">4</div>
<div class="t" style="left:39.87px;top:340.00px;font-size:13.08px;color:#217346;transform:scaleX(0.9200);transform-origin:0 0;">5</div>
<div class="t" style="left:39.81px;top:360.00px;font-size:13.08px;color:#217346;transform:scaleX(0.9200);transform-origin:0 0;">6</div>
<div class="t" style="left:39.85px;top:380.00px;font-size:13.08px;color:#217346;transform:scaleX(0.9200);transform-origin:0 0;">7</div>
<div class="t" style="left:39.85px;top:400.00px;font-size:13.08px;color:#217346;transform:scaleX(0.9200);transform-origin:0 0;">8</div>
<div class="t" style="left:39.85px;top:420.00px;font-size:13.08px;color:#217346;transform:scaleX(0.9200);transform-origin:0 0;">9</div>
<div class="t" style="left:36.29px;top:440.00px;font-size:13.08px;color:#217346;transform:scaleX(0.9200);transform-origin:0 0;">10</div>
<div class="t" style="left:36.79px;top:460.00px;font-size:13.08px;color:#217346;transform:scaleX(0.9200);transform-origin:0 0;">11</div>
<div class="t" style="left:36.35px;top:480.00px;font-size:13.08px;color:#262626;transform:scaleX(0.9200);transform-origin:0 0;">12</div>
<div class="t" style="left:36.32px;top:500.00px;font-size:13.08px;color:#262626;transform:scaleX(0.9200);transform-origin:0 0;">13</div>
<div class="t" style="left:36.23px;top:520.00px;font-size:13.08px;color:#262626;transform:scaleX(0.9200);transform-origin:0 0;">14</div>
<div class="t" style="left:36.30px;top:540.00px;font-size:13.08px;color:#262626;transform:scaleX(0.9200);transform-origin:0 0;">15</div>
<div class="t" style="left:36.32px;top:560.00px;font-size:13.08px;color:#262626;transform:scaleX(0.9200);transform-origin:0 0;">16</div>
<div class="t" style="left:36.35px;top:580.00px;font-size:13.08px;color:#262626;transform:scaleX(0.9200);transform-origin:0 0;">17</div>
<div class="t" style="left:36.31px;top:600.00px;font-size:13.08px;color:#262626;transform:scaleX(0.9200);transform-origin:0 0;">18</div>
<div class="t" style="left:36.33px;top:620.00px;font-size:13.08px;color:#262626;transform:scaleX(0.9200);transform-origin:0 0;">19</div>
<div class="t" style="left:36.44px;top:640.00px;font-size:13.08px;color:#262626;transform:scaleX(0.9200);transform-origin:0 0;">20</div>
<div class="t" style="left:36.50px;top:660.00px;font-size:13.08px;color:#262626;transform:scaleX(0.9200);transform-origin:0 0;">21</div>
<div class="t" style="left:36.51px;top:680.00px;font-size:13.08px;color:#262626;transform:scaleX(0.9200);transform-origin:0 0;">22</div>
<div class="t" style="left:36.47px;top:700.00px;font-size:13.08px;color:#262626;transform:scaleX(0.9200);transform-origin:0 0;">23</div>
<div class="t" style="left:36.38px;top:720.00px;font-size:13.08px;color:#262626;transform:scaleX(0.9200);transform-origin:0 0;">24</div>
<div class="t" style="left:36.46px;top:740.00px;font-size:13.08px;color:#262626;transform:scaleX(0.9200);transform-origin:0 0;">25</div>
<div class="t" style="left:36.47px;top:760.00px;font-size:13.08px;color:#262626;transform:scaleX(0.9200);transform-origin:0 0;">26</div>
<div class="a" style="left:183px;top:256px;width:122px;height:219px;background:#fff;"></div>
<svg class="a" style="left:184px;top:276px;" width="120" height="198" viewBox="0 0 120 198"><defs><pattern id="seld" width="3" height="6" patternUnits="userSpaceOnUse"><rect width="3" height="6" fill="#CCCCCC"/><rect x="1" y="1" width="1" height="1" fill="#B8B8B8"/><rect x="2" y="4" width="1" height="1" fill="#B8B8B8"/></pattern></defs><rect width="120" height="198" fill="url(#seld)"/></svg>
<div class="a" style="left:184px;top:275px;width:120px;height:1px;background:#A2A2A2;"></div>
<div class="a" style="left:184px;top:295px;width:120px;height:1px;background:#A2A2A2;"></div>
<div class="a" style="left:184px;top:315px;width:120px;height:1px;background:#A2A2A2;"></div>
<div class="a" style="left:184px;top:335px;width:120px;height:1px;background:#A2A2A2;"></div>
<div class="a" style="left:184px;top:355px;width:120px;height:1px;background:#A2A2A2;"></div>
<div class="a" style="left:184px;top:375px;width:120px;height:1px;background:#A2A2A2;"></div>
<div class="a" style="left:184px;top:395px;width:120px;height:1px;background:#A2A2A2;"></div>
<div class="a" style="left:184px;top:415px;width:120px;height:1px;background:#A2A2A2;"></div>
<div class="a" style="left:184px;top:435px;width:120px;height:1px;background:#A2A2A2;"></div>
<div class="a" style="left:184px;top:455px;width:120px;height:1px;background:#A2A2A2;"></div>
<div class="a" style="left:181px;top:254px;width:2px;height:223px;background:#217346;"></div>
<div class="a" style="left:305px;top:254px;width:2px;height:223px;background:#217346;"></div>
<div class="a" style="left:181px;top:475px;width:126px;height:2px;background:#217346;"></div>
<div class="a" style="left:181px;top:254px;width:126px;height:2px;background:#217346;"></div>
<div class="a" style="left:303px;top:473px;width:5px;height:5px;background:#217346;"></div>
<div class="t" style="left:57.39px;top:261.00px;font-size:12.94px;color:#1E1E1E;transform:scaleX(1.0500);transform-origin:0 0;">Груша</div>
<div class="t" style="left:57.86px;top:281.00px;font-size:12.94px;color:#1E1E1E;transform:scaleX(1.0500);transform-origin:0 0;">Яблоко</div>
<div class="t" style="left:58.47px;top:301.00px;font-size:12.94px;color:#1E1E1E;transform:scaleX(1.0500);transform-origin:0 0;">Апельсин</div>
<div class="t" style="left:57.39px;top:321.00px;font-size:12.94px;color:#1E1E1E;transform:scaleX(1.0500);transform-origin:0 0;">Мандарин</div>
<div class="t" style="left:58.47px;top:341.00px;font-size:12.94px;color:#1E1E1E;transform:scaleX(1.0500);transform-origin:0 0;">Ананас</div>
<div class="t" style="left:57.81px;top:361.00px;font-size:12.94px;color:#1E1E1E;transform:scaleX(1.0500);transform-origin:0 0;">Слива</div>
<div class="t" style="left:57.39px;top:381.00px;font-size:12.94px;color:#1E1E1E;transform:scaleX(1.0500);transform-origin:0 0;">Виноград</div>
<div class="t" style="left:58.47px;top:401.00px;font-size:12.94px;color:#1E1E1E;transform:scaleX(1.0500);transform-origin:0 0;">Абрикос</div>
<div class="t" style="left:57.40px;top:421.00px;font-size:12.94px;color:#1E1E1E;transform:scaleX(1.0500);transform-origin:0 0;">Персик</div>
<div class="t" style="left:58.47px;top:441.00px;font-size:12.94px;color:#1E1E1E;transform:scaleX(1.0500);transform-origin:0 0;">Айва</div>
<div class="t" style="left:58.47px;top:461.00px;font-size:12.94px;color:#1E1E1E;transform:scaleX(1.0500);transform-origin:0 0;">Алыча</div>
<div class="t" style="left:295.75px;top:260.00px;font-size:13.08px;color:#1E1E1E;transform:scaleX(1.0800);transform-origin:0 0;">7</div>
<div class="t" style="left:288.93px;top:280.00px;font-size:13.08px;color:#1E1E1E;transform:scaleX(1.0800);transform-origin:0 0;">11</div>
<div class="t" style="left:295.64px;top:300.00px;font-size:13.08px;color:#1E1E1E;transform:scaleX(1.0800);transform-origin:0 0;">5</div>
<div class="t" style="left:295.65px;top:320.00px;font-size:13.08px;color:#1E1E1E;transform:scaleX(1.0800);transform-origin:0 0;">8</div>
<div class="t" style="left:295.45px;top:340.00px;font-size:13.08px;color:#1E1E1E;transform:scaleX(1.0800);transform-origin:0 0;">4</div>
<div class="t" style="left:287.74px;top:360.00px;font-size:13.08px;color:#1E1E1E;transform:scaleX(1.0800);transform-origin:0 0;">10</div>
<div class="t" style="left:295.67px;top:380.00px;font-size:13.08px;color:#1E1E1E;transform:scaleX(1.0800);transform-origin:0 0;">6</div>
<div class="t" style="left:295.74px;top:400.00px;font-size:13.08px;color:#1E1E1E;transform:scaleX(1.0800);transform-origin:0 0;">1</div>
<div class="t" style="left:295.71px;top:420.00px;font-size:13.08px;color:#1E1E1E;transform:scaleX(1.0800);transform-origin:0 0;">9</div>
<div class="t" style="left:295.75px;top:440.00px;font-size:13.08px;color:#1E1E1E;transform:scaleX(1.0800);transform-origin:0 0;">2</div>
<div class="t" style="left:295.67px;top:460.00px;font-size:13.08px;color:#1E1E1E;transform:scaleX(1.0800);transform-origin:0 0;">3</div>
<div class="a" style="left:896px;top:236px;width:20px;height:527px;background:#E6E6E6;"></div>
<div class="a" style="left:899px;top:238px;width:15px;height:15px;background:#fff;border:1px solid #C6C6C6"></div>
<svg class="a" style="left:902px;top:243px;" width="9" height="5" viewBox="0 0 9 5"><path d="M0 5L4.5 0L9 5Z" fill="#6A6A6A"/></svg>
<div class="a" style="left:899px;top:253px;width:15px;height:476px;background:#fff;border:1px solid #C6C6C6"></div>
<div class="a" style="left:899px;top:729px;width:15px;height:20px;background:#D6D6D6;"></div>
<div class="a" style="left:899px;top:749px;width:15px;height:15px;background:#fff;border:1px solid #C6C6C6"></div>
<svg class="a" style="left:902px;top:754px;" width="9" height="5" viewBox="0 0 9 5"><path d="M0 0H9L4.5 5Z" fill="#6A6A6A"/></svg>
<div class="a" style="left:32px;top:764px;width:884px;height:27px;background:#E6E6E6;"></div>
<svg class="a" style="left:55px;top:771px;" width="6" height="10" viewBox="0 0 6 10"><path d="M5 0V10L0 5Z" fill="#BDBDBD"/></svg>
<svg class="a" style="left:85px;top:771px;" width="6" height="10" viewBox="0 0 6 10"><path d="M0 0V10L5 5Z" fill="#BDBDBD"/></svg>
<div class="a" style="left:130px;top:763px;width:60px;height:25px;background:#fff;"></div>
<div class="a" style="left:130px;top:763px;width:1px;height:23px;background:#ABABAB;"></div>
<div class="a" style="left:189px;top:763px;width:1px;height:23px;background:#ABABAB;"></div>
<div class="a" style="left:130px;top:786px;width:60px;height:2px;background:#217346;"></div>
<div class="t" style="left:141.85px;top:770.00px;font-size:13.81px;color:#1F6B40;font-weight:bold;transform:scaleX(0.8607);transform-origin:0 0;">Лист1</div>
<svg class="a" style="left:222px;top:768px;" width="18" height="18" viewBox="0 0 18 18"><circle cx="9" cy="9" r="7.5" fill="none" stroke="#6B8F7B" stroke-width="1.2"/><path d="M9 5V13M5 9H13" stroke="#6B8F7B" stroke-width="1.4"/></svg>
<div class="a" style="left:562px;top:772px;width:2px;height:2px;background:#B0B0B0;"></div>
<div class="a" style="left:562px;top:776px;width:2px;height:2px;background:#B0B0B0;"></div>
<div class="a" style="left:562px;top:780px;width:2px;height:2px;background:#B0B0B0;"></div>
<div class="a" style="left:579px;top:770px;width:16px;height:15px;background:#fff;border:1px solid #C6C6C6"></div>
<svg class="a" style="left:584px;top:773px;" width="5" height="9" viewBox="0 0 5 9"><path d="M5 0V9L0 4.5Z" fill="#6A6A6A"/></svg>
<div class="a" style="left:595px;top:770px;width:259px;height:15px;background:#fff;border:1px solid #C6C6C6"></div>
<div class="a" style="left:854px;top:770px;width:27px;height:15px;background:#D6D6D6;"></div>
<div class="a" style="left:881px;top:770px;width:15px;height:15px;background:#fff;border:1px solid #C6C6C6"></div>
<svg class="a" style="left:886px;top:773px;" width="5" height="9" viewBox="0 0 5 9"><path d="M0 0V9L5 4.5Z" fill="#6A6A6A"/></svg>
<div class="a" style="left:32px;top:791px;width:884px;height:1px;background:#D5D5D5;"></div>
<div class="a" style="left:32px;top:792px;width:884px;height:21px;background:#F3F3F3;"></div>
<div class="a" style="left:32px;top:813px;width:884px;height:1px;background:#217346;"></div>
<div class="t" style="left:37.73px;top:797.00px;font-size:11.05px;color:#262626;transform:scaleX(1.0751);transform-origin:0 0;">Готово</div>
<svg class="a" style="left:101px;top:795px;" width="15" height="13" viewBox="0 0 15 13"><circle cx="4" cy="3.5" r="3" fill="#555"/><rect x="3.5" y="3.5" width="11" height="9" fill="#fff" stroke="#555" stroke-width="1"/><path d="M3.5 6.5H14.5M3.5 9.5H14.5M7 3.5V12.5M11 3.5V12.5" stroke="#777" stroke-width="1"/></svg>
<div class="t" style="left:363.13px;top:798.00px;font-size:11.19px;color:#262626;transform:scaleX(0.9926);transform-origin:0 0;">Среднее: 6</div>
<div class="t" style="left:435.56px;top:798.00px;font-size:11.19px;color:#262626;transform:scaleX(1.0239);transform-origin:0 0;">Количество: 11</div>
<div class="t" style="left:531.94px;top:798.00px;font-size:11.19px;color:#262626;transform:scaleX(0.9740);transform-origin:0 0;">Сумма: 66</div>
<div class="a" style="left:603px;top:792px;width:40px;height:21px;background:#D2D2D2;"></div>
<svg class="a" style="left:615.5px;top:795px;" width="14" height="13" viewBox="0 0 14 13"><rect x="0.8" y="0.8" width="12.2" height="11.4" fill="none" stroke="#555" stroke-width="1.6"/><path d="M4.9 0.8V12.2M8.9 0.8V12.2M0.8 4.6H13M0.8 8.4H13" stroke="#555" stroke-width="1.5"/></svg>
<svg class="a" style="left:655.5px;top:795px;" width="15" height="13" viewBox="0 0 15 13"><rect x="0.6" y="0.6" width="13.6" height="11.8" fill="none" stroke="#555" stroke-width="1.2"/><rect x="3.5" y="3.3" width="8" height="7" fill="none" stroke="#555" stroke-width="1"/><path d="M5.3 5.3H9.7M5.3 7.1H9.7M5.3 8.9H9.7" stroke="#555" stroke-width="1"/></svg>
<svg class="a" style="left:695.5px;top:795px;" width="15" height="13" viewBox="0 0 15 13"><rect x="0.6" y="0.6" width="13.6" height="11.8" fill="none" stroke="#555" stroke-width="1.2"/><path d="M3.2 0.6V7.6H8.6V0.6M5.9 0.6V7.6" fill="none" stroke="#555" stroke-width="1"/></svg>
<div class="a" style="left:728px;top:802px;width:9px;height:1px;background:#444;"></div>
<div class="a" style="left:742px;top:802px;width:100px;height:1px;background:#A0A0A0;"></div>
<div class="a" style="left:790px;top:797px;width:5px;height:11px;background:#555;"></div>
<div class="a" style="left:846px;top:802px;width:10px;height:1px;background:#444;"></div>
<div class="a" style="left:850.5px;top:797.5px;width:1.0px;height:10.0px;background:#444;"></div>
<div class="t" style="left:867.99px;top:796.00px;font-size:11.77px;color:#262626;transform:scaleX(0.9105);transform-origin:0 0;">100 %</div>
<div class="a" style="left:175.1px;top:245px;width:140.79999999999998px;height:244.2px;border:4.5px solid #FF0000;border-radius:11px;box-shadow:0.5px 3px 3px 1px rgba(0,0,0,0.3), -1px 0 3px rgba(0,0,0,0.15), inset 1px 2px 3px rgba(0,0,0,0.32)"></div>
<div class="a" style="left:277.5px;top:195px;width:212.7px;height:35.099999999999994px;border:4.5px solid #FF0000;border-radius:10px;box-shadow:0.5px 3px 3px 1px rgba(0,0,0,0.3), -1px 0 3px rgba(0,0,0,0.15), inset 1px 2px 3px rgba(0,0,0,0.32)"></div>
<svg class="a" style="left:291px;top:472px" width="52" height="52" viewBox="-25.50 -25.50 52 52"><defs><pattern id="pya" width="3" height="3" patternUnits="userSpaceOnUse" x="-25.50" y="-25.50"><rect x="1" y="1" width="1" height="1" fill="#FFE6A0"/></pattern><pattern id="pra" width="2" height="2" patternUnits="userSpaceOnUse" x="-25.50" y="-25.50"><rect x="0" y="0" width="1" height="1" fill="#FF1200"/><rect x="1" y="1" width="1" height="1" fill="#FF1200"/></pattern><radialGradient id="gya" gradientUnits="userSpaceOnUse" cx="-9" cy="-9" r="14"><stop offset="0" stop-color="#fff"/><stop offset="0.6" stop-color="#fff"/><stop offset="1" stop-color="#000"/></radialGradient><radialGradient id="gra" gradientUnits="userSpaceOnUse" cx="-9" cy="-9" r="36"><stop offset="0" stop-color="#000"/><stop offset="0.55" stop-color="#000"/><stop offset="0.85" stop-color="#fff"/></radialGradient><mask id="mya"><circle r="23.5" fill="url(#gya)"/></mask><mask id="mra"><circle r="23.5" fill="url(#gra)"/></mask></defs><circle r="23.5" fill="#F46D3C"/><circle r="23.5" fill="url(#pya)" mask="url(#mya)"/><circle r="23.5" fill="url(#pra)" mask="url(#mra)"/><circle r="23.2" fill="none" stroke="rgba(40,30,60,0.55)" stroke-width="0.8"/><path d="M-5.6 -6.6L-0.6 -10.3H3.7V10.3H-1.6V-3.6L-5.6 -2.6Z" fill="#fff" stroke="#1C1C28" stroke-width="1.3" stroke-linejoin="round"/></svg>
<svg class="a" style="left:475px;top:215px" width="52" height="52" viewBox="-25.70 -25.70 52 52"><defs><pattern id="pyb" width="3" height="3" patternUnits="userSpaceOnUse" x="-25.70" y="-25.70"><rect x="1" y="1" width="1" height="1" fill="#FFE6A0"/></pattern><pattern id="prb" width="2" height="2" patternUnits="userSpaceOnUse" x="-25.70" y="-25.70"><rect x="0" y="0" width="1" height="1" fill="#FF1200"/><rect x="1" y="1" width="1" height="1" fill="#FF1200"/></pattern><radialGradient id="gyb" gradientUnits="userSpaceOnUse" cx="-9" cy="-9" r="14"><stop offset="0" stop-color="#fff"/><stop offset="0.6" stop-color="#fff"/><stop offset="1" stop-color="#000"/></radialGradient><radialGradient id="grb" gradientUnits="userSpaceOnUse" cx="-9" cy="-9" r="36"><stop offset="0" stop-color="#000"/><stop offset="0.55" stop-color="#000"/><stop offset="0.85" stop-color="#fff"/></radialGradient><mask id="myb"><circle r="23.3" fill="url(#gyb)"/></mask><mask id="mrb"><circle r="23.3" fill="url(#grb)"/></mask></defs><circle r="23.3" fill="#F46D3C"/><circle r="23.3" fill="url(#pyb)" mask="url(#myb)"/><circle r="23.3" fill="url(#prb)" mask="url(#mrb)"/><circle r="23.0" fill="none" stroke="rgba(40,30,60,0.55)" stroke-width="0.8"/><text x="-0.6" y="10.6" text-anchor="middle" style="font-family:'Liberation Sans';font-weight:bold;font-size:30px" transform="scale(0.9 1)" fill="#fff" stroke="#1C1C28" stroke-width="2.2" paint-order="stroke">2</text></svg>
</body></html>
